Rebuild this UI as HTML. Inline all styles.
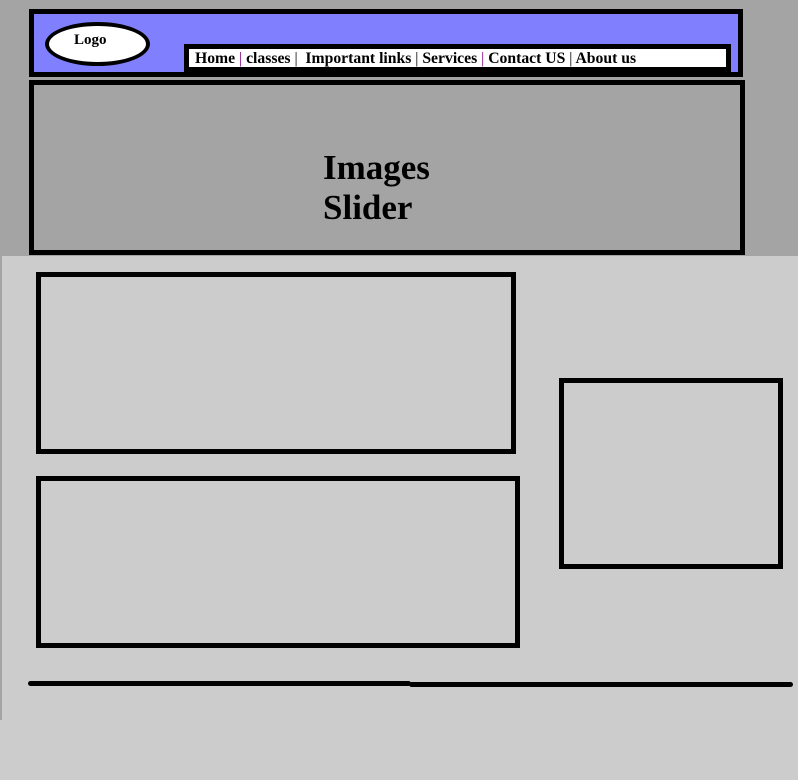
<!DOCTYPE html>
<html><head><style>
html,body{margin:0;padding:0;width:798px;height:780px;overflow:hidden;background:#cccccc;position:relative;font-family:"Liberation Serif",serif}
div{position:absolute;box-sizing:border-box}
</style></head><body>
<div style="left:0;top:0;width:798px;height:256px;background:#a4a4a4"></div>
<div style="left:0;top:255px;width:2px;height:465px;background:#a4a4a4"></div>
<div style="left:29px;top:9px;width:714px;height:68px;background:#8080ff;border:5px solid #000"></div>
<div style="left:45px;top:22px;width:105px;height:44px;background:#fff;border:4px solid #000;border-radius:50%"></div>
<div style="left:74px;top:30px;font-size:15px;font-weight:bold;line-height:20px">Logo</div>
<div style="left:184px;top:44px;width:547px;height:28px;background:#fff;border:5px solid #000"></div>
<div style="left:195px;top:50px;font-size:15.7px;font-weight:bold;line-height:18px;white-space:nowrap">Home <span style="font-weight:normal;color:#800080">|</span> classes <span style="font-weight:normal">|</span>&nbsp; Important links <span style="font-weight:normal">|</span> Services <span style="font-weight:normal;color:#800080">|</span> Contact US <span style="font-weight:normal">|</span> About us</div>
<div style="left:29px;top:80px;width:716px;height:175px;border:5px solid #000"></div>
<div style="left:323px;top:148px;font-size:35px;font-weight:bold;line-height:40px">Images<br>Slider</div>
<div style="left:36px;top:272px;width:480px;height:182px;border:5px solid #000"></div>
<div style="left:36px;top:476px;width:484px;height:172px;border:5px solid #000"></div>
<div style="left:559px;top:378px;width:224px;height:191px;border:5px solid #000"></div>
<div style="left:28px;top:681px;width:383px;height:5px;background:#000;border-radius:3px"></div>
<div style="left:409px;top:682px;width:384px;height:5px;background:#000;border-radius:3px"></div>
</body></html>
